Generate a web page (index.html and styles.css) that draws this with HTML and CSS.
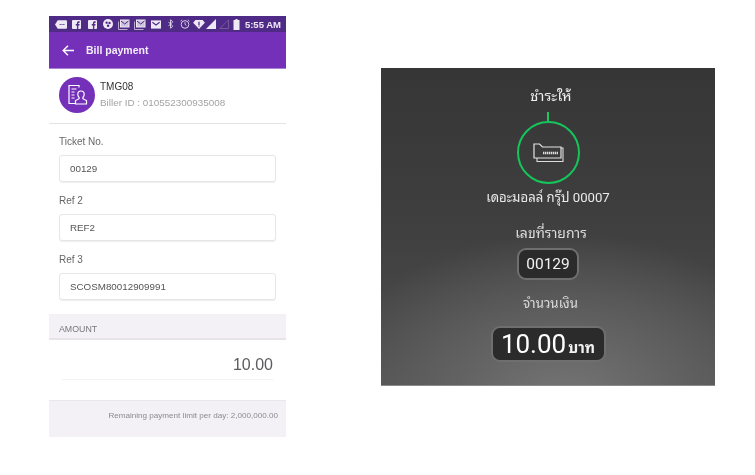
FILE: index.html
```html
<!DOCTYPE html>
<html lang="en">
<head>
<meta charset="utf-8">
<title>Bill payment</title>
<link rel="stylesheet" href="styles.css">
</head>
<body>
<main class="page">
  <section class="phone">
    <div class="status">
      <div class="status-icons">
        <svg width="12" height="9" viewBox="0 0 13 9"><path d="M3 0h9a1 1 0 0 1 1 1v7a1 1 0 0 1-1 1H3L0 4.500z" fill="#efe9f6"/><path d="M5 4.500h6" stroke="#4f2a86" stroke-width="1.200" stroke-dasharray="1.200 .8"/></svg>
        <svg width="9" height="9" viewBox="0 0 10 10"><rect width="10" height="10" rx="1" fill="#efe9f6"/><path d="M5.500 10V6H4.200V4.400h1.300V3.400C5.500 2 6.300 1.500 7.400 1.500H8.500V3H7.700C7.200 3 7 3.200 7 3.700v.7h1.400L8.200 6H7v4z" fill="#4f2a86"/></svg>
        <svg width="9" height="9" viewBox="0 0 10 10"><rect width="10" height="10" rx="1" fill="#efe9f6"/><path d="M5.500 10V6H4.200V4.400h1.300V3.400C5.500 2 6.300 1.500 7.400 1.500H8.500V3H7.700C7.200 3 7 3.200 7 3.700v.7h1.400L8.200 6H7v4z" fill="#4f2a86"/></svg>
        <svg width="10" height="10" viewBox="0 0 11 11"><circle cx="5.500" cy="5.500" r="5.500" fill="#efe9f6"/><circle cx="4" cy="4" r="1.300" fill="#4f2a86"/><circle cx="7.200" cy="4.300" r="1.300" fill="#4f2a86"/><circle cx="5.600" cy="7.400" r="1.400" fill="#4f2a86"/></svg>
        <svg width="12" height="11" viewBox="0 0 12 11"><path d="M.5 2.500v8h9" fill="none" stroke="#b9a9d0"/><rect x="2.500" y="1" width="8.500" height="7" fill="#cfc4de" stroke="#efe9f6"/><path d="M3 2l3.700 3L10.500 2" fill="none" stroke="#4f2a86"/></svg>
        <svg width="12" height="11" viewBox="0 0 12 11"><path d="M.5 2.500v8h9" fill="none" stroke="#b9a9d0"/><rect x="2.500" y="1" width="8.500" height="7" fill="#cfc4de" stroke="#efe9f6"/><path d="M3 2l3.700 3L10.500 2" fill="none" stroke="#4f2a86"/></svg>
        <svg width="10" height="9" viewBox="0 0 11 9"><rect width="11" height="9" fill="#efe9f6"/><path d="M1.500 2l4 3 4-3" fill="none" stroke="#4f2a86" stroke-width="1.200"/></svg>
      </div>
      <div class="status-right">
        <svg width="6" height="10" viewBox="0 0 7 11"><path d="M.5 3l5 5L3 10.500V.5L5.500 3 .5 8" fill="none" stroke="#efe9f6"/></svg>
        <svg width="10" height="10" viewBox="0 0 11 11"><circle cx="5.500" cy="6" r="4.200" fill="none" stroke="#d9cfe6" stroke-width="1.100"/><path d="M5.500 3.500V6l1.600 1M.6 2.400L2.400.8M10.400 2.400L8.600.8" fill="none" stroke="#d9cfe6"/></svg>
        <svg width="12" height="9" viewBox="0 0 13 10"><path d="M0 3l2.500-3h8L13 3l-6.500 7z" fill="#efe9f6"/><path d="M5.800 2h1.400v3.500H5.800zM5.800 6h1.400v1.200H5.800z" fill="#4f2a86"/></svg>
        <svg width="10" height="10" viewBox="0 0 10 10"><path d="M0 10L10 0v10z" fill="#efe9f6"/></svg>
        <svg width="10" height="10" viewBox="0 0 10 10"><path d="M.8 9.500L9.500.8v8.700z" fill="none" stroke="#75579f"/></svg>
        <svg width="7" height="11" viewBox="0 0 7 11"><path d="M2.500 0h2v1h2v10h-6V1h2z" fill="#efe9f6"/></svg>
        <span class="clock">5:55 AM</span>
      </div>
    </div>
    <header class="appbar">
      <svg width="12" height="11" viewBox="0 0 12 11"><path d="M12 5.500H1.500M6 .8L1.200 5.500 6 10.200" fill="none" stroke="#fff" stroke-width="1.400"/></svg>
      <h1 class="appbar-title">Bill payment</h1>
    </header>
    <div class="biller">
      <div class="avatar">
        <svg width="22" height="22" viewBox="0 0 22 22"><path d="M13 3.500V1.500H3v18h6M3 19.500h5M5.500 5h5M5.500 8h3M5.500 11h3M5.500 14h3" fill="none" stroke="#fff" stroke-width="1.200"/><path d="M15 7c2 0 3.200 1.400 3.200 3.300 0 1.400-.6 2.500-1.300 3.200v1.200l3.600 1.800v3.500H9.500V16.500l3.600-1.800v-1.200c-.7-.7-1.300-1.800-1.300-3.200C11.800 8.400 13 7 15 7z" fill="none" stroke="#fff" stroke-width="1.200"/></svg>
      </div>
      <div class="biller-text">
        <div class="biller-name">TMG08</div>
        <div class="biller-id">Biller ID : 010552300935008</div>
      </div>
    </div>
    <form class="fields">
      <div class="field"><label class="field-label">Ticket No.</label><div class="input">00129</div></div>
      <div class="field"><label class="field-label">Ref 2</label><div class="input">REF2</div></div>
      <div class="field"><label class="field-label">Ref 3</label><div class="input">SCOSM80012909991</div></div>
    </form>
    <div class="amount-head">AMOUNT</div>
    <div class="amount-body"><div class="amount-value">10.00</div></div>
    <div class="limit">Remaining payment limit per day: 2,000,000.00</div>
  </section>

  <section class="panel">
    <div class="pay-to">ชำระให้</div>
    <div class="stem"></div>
    <div class="ring">
      <svg class="ticket" width="31" height="20" viewBox="0 0 31 20"><path d="M4 15v3.500h26V5h-2" fill="none" stroke="#ddd" stroke-width="1.100"/><path d="M1 1h5.500l3 3H28v11H1z" fill="none" stroke="#e4e4e4" stroke-width="1.200"/><path d="M10 10h15" stroke="#ddd" stroke-width="2.400" stroke-dasharray="1.400 .6"/></svg>
    </div>
    <div class="merchant">เดอะมอลล์ กรุ๊ป 00007</div>
    <div class="caption caption-ref">เลขที่รายการ</div>
    <div class="chip chip-ref">00129</div>
    <div class="caption caption-amount">จำนวนเงิน</div>
    <div class="chip chip-large"><span class="big">10.00</span><span class="unit">บาท</span></div>
  </section>
</main>
</body>
</html>
```
FILE: styles.css
```css
* { box-sizing: border-box; }
html, body { margin: 0; background: #fff; }
body { width: 755px; height: 475px; overflow: hidden; }

.page {
  display: flex;
  align-items: flex-start;
  padding: 16px 0 0 49px;
  gap: 95px;
}

/* Phone */
.phone {
  width: 237px;
  height: 421px;
  display: flex;
  flex-direction: column;
  background: #fff;
  font-family: "Liberation Sans", Arial, sans-serif;
  filter: blur(.4px);
}
.status {
  height: 16px;
  background: #4f2a86;
  display: flex;
  align-items: center;
  justify-content: space-between;
  padding: 0 5px 0 6px;
}
.status-icons, .status-right { display: grid; align-items: center; }
.status-icons { grid-template-columns: 17px 16px 15px 15px 16px 17px auto; }
.status-right { grid-template-columns: 12px 13px 13px 13px 14px 12px auto; }
.clock { color: #efe9f6; font-size: 9.500px; font-weight: 700; }
.appbar {
  height: 37px;
  background: #7430b9;
  border-bottom: 1px solid #a784d0;
  display: flex;
  align-items: center;
  gap: 12px;
  padding: 0 0 0 13px;
}
.appbar-title { margin: 0; color: #f3eefa; font-size: 10.500px; font-weight: 700; }
.biller {
  height: 55px;
  border-bottom: 1px solid #e4e4e6;
  display: flex;
  align-items: center;
  gap: 5px;
  padding: 0 0 2px 10px;
}
.avatar {
  width: 36px;
  height: 36px;
  border-radius: 50%;
  background: #7430b9;
  display: flex;
  align-items: center;
  justify-content: center;
}
.biller-text { display: flex; flex-direction: column; gap: 3px; margin-bottom: 2px; }
.biller-name { font-size: 10px; line-height: 13px; color: #333; }
.biller-id { font-size: 9.900px; line-height: 13px; color: #a3a3a6; }
.fields {
  display: flex;
  flex-direction: column;
  gap: 12.750px;
  padding: 12px 10px 0;
}
.field-label { display: block; font-size: 10px; line-height: 12px; color: #666; margin-bottom: 7px; }
.input {
  height: 27px;
  border: 1px solid #e6e6e8;
  border-radius: 3px;
  box-shadow: 0 1px 1px #eee;
  padding: 0 10px;
  display: flex;
  align-items: center;
  font-size: 9.800px;
  color: #555;
}
.amount-head {
  margin-top: 14.500px;
  height: 26px;
  background: #f3f1f5;
  border-bottom: 2px solid #e6e4e9;
  padding: 9px 10px 0;
  font-size: 8.800px;
  line-height: 12px;
  color: #77767c;
}
.amount-body { height: 60px; padding: 15px 13px 0; }
.amount-value {
  height: 25px;
  border-bottom: 1px solid #f3f3f4;
  text-align: right;
  font-size: 16px;
  line-height: 20px;
  color: #5b5b60;
}
.limit {
  flex: 1;
  background: #f3f1f5;
  border-top: 1px solid #e9e7ec;
  padding: 9px 8px 0 0;
  text-align: right;
  font-size: 8.100px;
  line-height: 11px;
  color: #8a8a90;
}

/* Dark panel */
.panel {
  width: 334px;
  height: 318px;
  margin-top: 52px;
  display: flex;
  flex-direction: column;
  align-items: center;
  color: #eee;
  font-family: Roboto, "Noto Sans Thai Looped", Loma, Garuda, "Noto Sans Thai", "Noto Sans", sans-serif;
  background:
    radial-gradient(ellipse 250px 170px at 55% 106%, #767676 0%, #626262 45%, rgba(72,72,72,0) 100%),
    linear-gradient(#363636, #3e3e3e 45%, #4e4e4e);
  border-bottom: 1px solid #8a8a8a;
  filter: blur(.4px);
}
.pay-to { margin-top: 18px; padding-left: 6px; height: 21px; font-size: 14.500px; line-height: 21px; color: #f0f0f0; }
.stem { margin-top: 5px; width: 2px; height: 9px; background: #1fc65f; }
.ring {
  width: 63px;
  height: 63px;
  border: 2px solid #16c45c;
  border-radius: 50%;
  display: flex;
  align-items: center;
  justify-content: center;
}
.merchant { margin-top: 4px; height: 20px; font-size: 13.200px; line-height: 20px; color: #e9e9e9; }
.caption { padding-left: 6px; line-height: 20px; height: 20px; color: #dcdcdc; }
.caption-ref { margin-top: 15px; font-size: 14px; }
.caption-amount { margin-top: 14px; font-size: 13.300px; padding-left: 5px; }
.chip {
  width: 62px;
  height: 32px;
  border: 2px solid #6f6f6f;
  border-radius: 9px;
  background: #2b2b2b;
  display: flex;
  align-items: center;
  justify-content: center;
  font-size: 15.500px;
  color: #f2f2f2;
}
.chip-ref { margin-top: 5px; }
.chip-large {
  margin-top: 12px;
  width: 115px;
  height: 36px;
  gap: 2px;
  align-items: baseline;
  line-height: 33px;
}
.big { font-size: 26px; color: #fff; }
.unit { font-size: 15px; font-weight: 700; color: #f2f2f2; }
```
